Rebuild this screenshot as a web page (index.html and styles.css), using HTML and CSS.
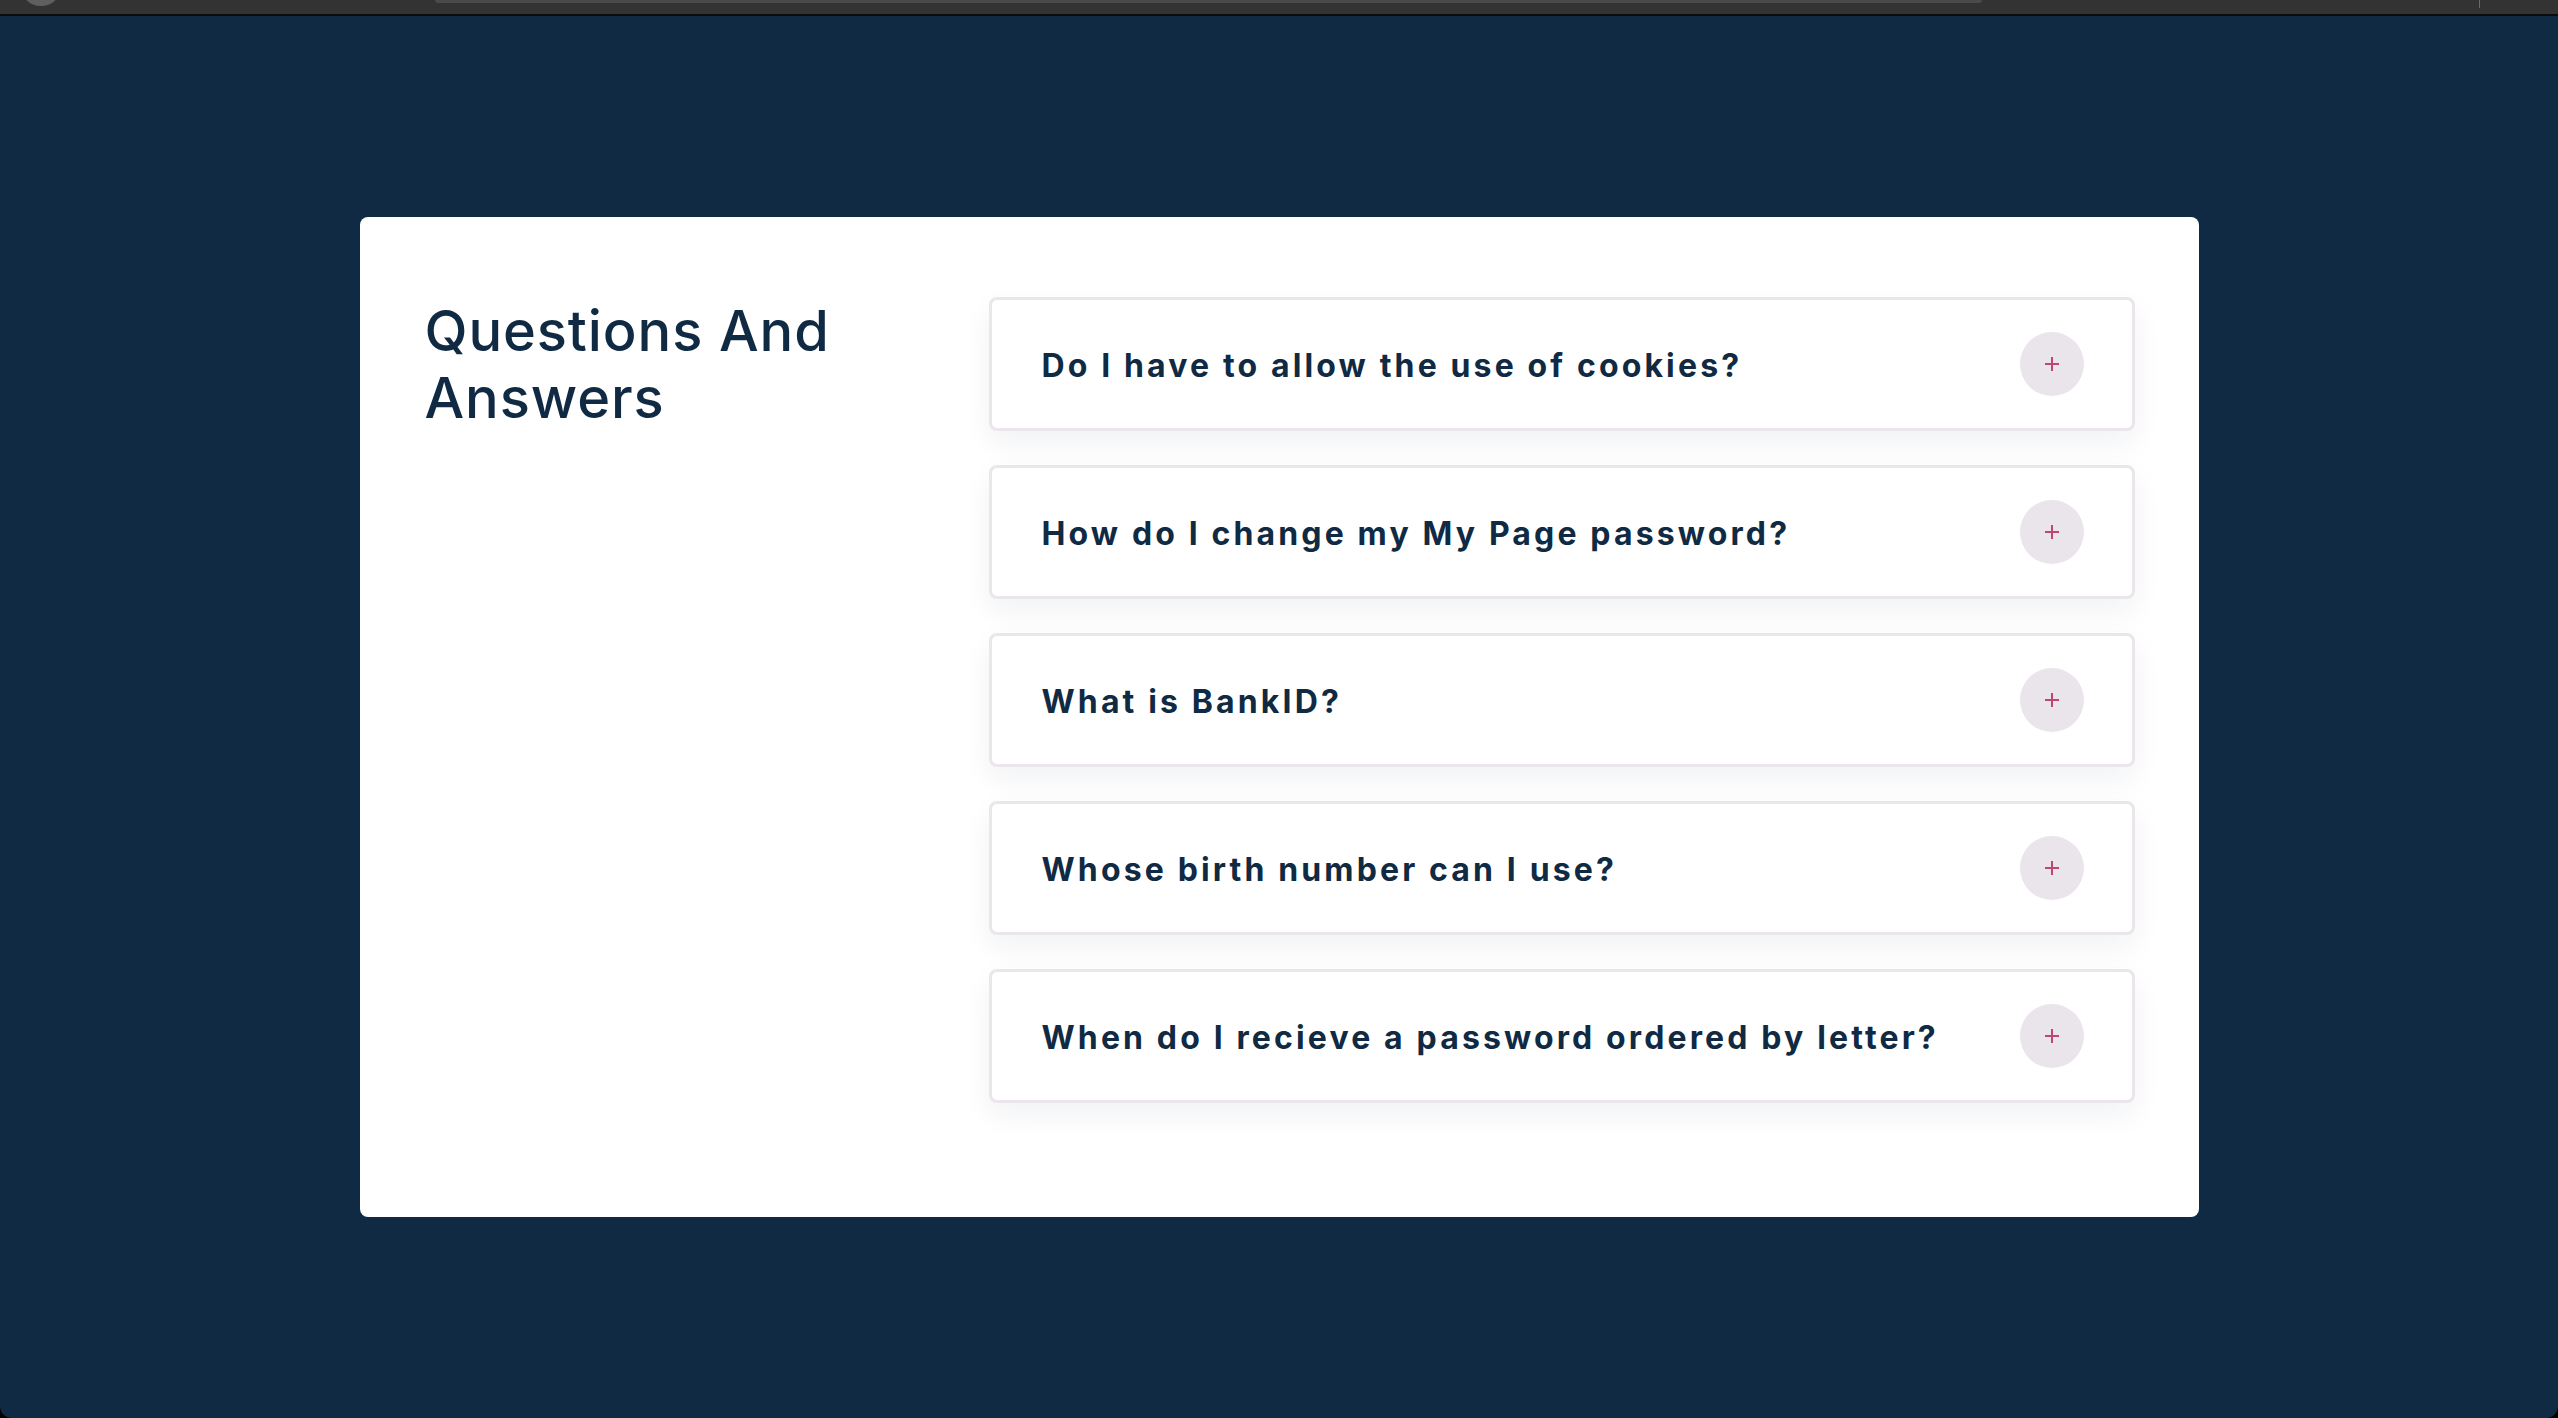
FILE: index.html
```html
<!DOCTYPE html>
<html lang="en">
<head>
<meta charset="utf-8">
<title>Questions And Answers</title>
<link rel="stylesheet" href="styles.css">
</head>
<body>
<div class="chrome">
  <span class="chrome-dot"></span>
  <span class="chrome-bar"></span>
  <span class="chrome-tick"></span>
</div>
<main class="stage">
  <section class="card">
    <h2 class="title">Questions And<br>Answers</h2>
    <div class="list">
      <div class="item"><span class="question">Do I have to allow the use of cookies?</span><span class="toggle"><svg viewBox="0 0 16 16" width="16" height="16"><path d="M8 1v14M1 8h14" stroke="#c2456e" stroke-width="2" fill="none"/></svg></span></div>
      <div class="item"><span class="question">How do I change my My Page password?</span><span class="toggle"><svg viewBox="0 0 16 16" width="16" height="16"><path d="M8 1v14M1 8h14" stroke="#c2456e" stroke-width="2" fill="none"/></svg></span></div>
      <div class="item"><span class="question">What is BankID?</span><span class="toggle"><svg viewBox="0 0 16 16" width="16" height="16"><path d="M8 1v14M1 8h14" stroke="#c2456e" stroke-width="2" fill="none"/></svg></span></div>
      <div class="item"><span class="question">Whose birth number can I use?</span><span class="toggle"><svg viewBox="0 0 16 16" width="16" height="16"><path d="M8 1v14M1 8h14" stroke="#c2456e" stroke-width="2" fill="none"/></svg></span></div>
      <div class="item"><span class="question">When do I recieve a password ordered by letter?</span><span class="toggle"><svg viewBox="0 0 16 16" width="16" height="16"><path d="M8 1v14M1 8h14" stroke="#c2456e" stroke-width="2" fill="none"/></svg></span></div>
    </div>
  </section>
</main>
</body>
</html>
```

FILE: styles.css
```css
html {
  background: #000;
}
body {
  margin: 0;
  font-family: Inter, "Noto Sans", "Liberation Sans", sans-serif;
  color: #102a43;
  overflow: hidden;
}
.chrome {
  height: 14px;
  background: #333333;
  border-bottom: 2px solid #0c0c0c;
  display: flex;
  align-items: flex-start;
  overflow: hidden;
}
.chrome-dot {
  width: 42px;
  height: 42px;
  margin: -36px 0 0 20px;
  border-radius: 50%;
  background: #5f5f5f;
  flex: none;
}
.chrome-bar {
  width: 1547px;
  height: 3px;
  margin-left: 373px;
  background: #4a4a4a;
  border-radius: 0 0 6px 6px;
  flex: none;
}
.chrome-tick {
  width: 1px;
  height: 8px;
  margin-left: 497px;
  background: #6a6a6a;
  flex: none;
}
.stage {
  height: 1402px;
  background: #102a43;
  border-radius: 0 0 12px 12px;
  display: flex;
  align-items: center;
  justify-content: center;
}
.card {
  width: 1839px;
  box-sizing: border-box;
  background: #fff;
  border-radius: 8px;
  padding: 80px 64px 80px 65px;
  display: grid;
  grid-template-columns: 564px 1fr;
  align-items: start;
}
.title {
  margin: 1px 0 0;
  font-size: 56px;
  line-height: 67px;
  font-weight: 500;
  letter-spacing: 0.016em;
}
.list {
  display: flex;
  flex-direction: column;
}
.item {
  display: flex;
  align-items: center;
  justify-content: space-between;
  border: 3px solid #ebe6ec;
  border-radius: 8px;
  padding: 32px 48px 32px 50px;
  margin-bottom: 34px;
  background: #fff;
  box-shadow: 0 12px 30px rgba(16, 42, 67, 0.06);
}
.question {
  font-size: 32px;
  font-weight: 700;
  letter-spacing: 0.098em;
  line-height: 40px;
  padding-top: 3px;
}
.toggle {
  width: 64px;
  height: 64px;
  border-radius: 50%;
  background: #eae5eb;
  display: flex;
  align-items: center;
  justify-content: center;
  flex: none;
}
```
